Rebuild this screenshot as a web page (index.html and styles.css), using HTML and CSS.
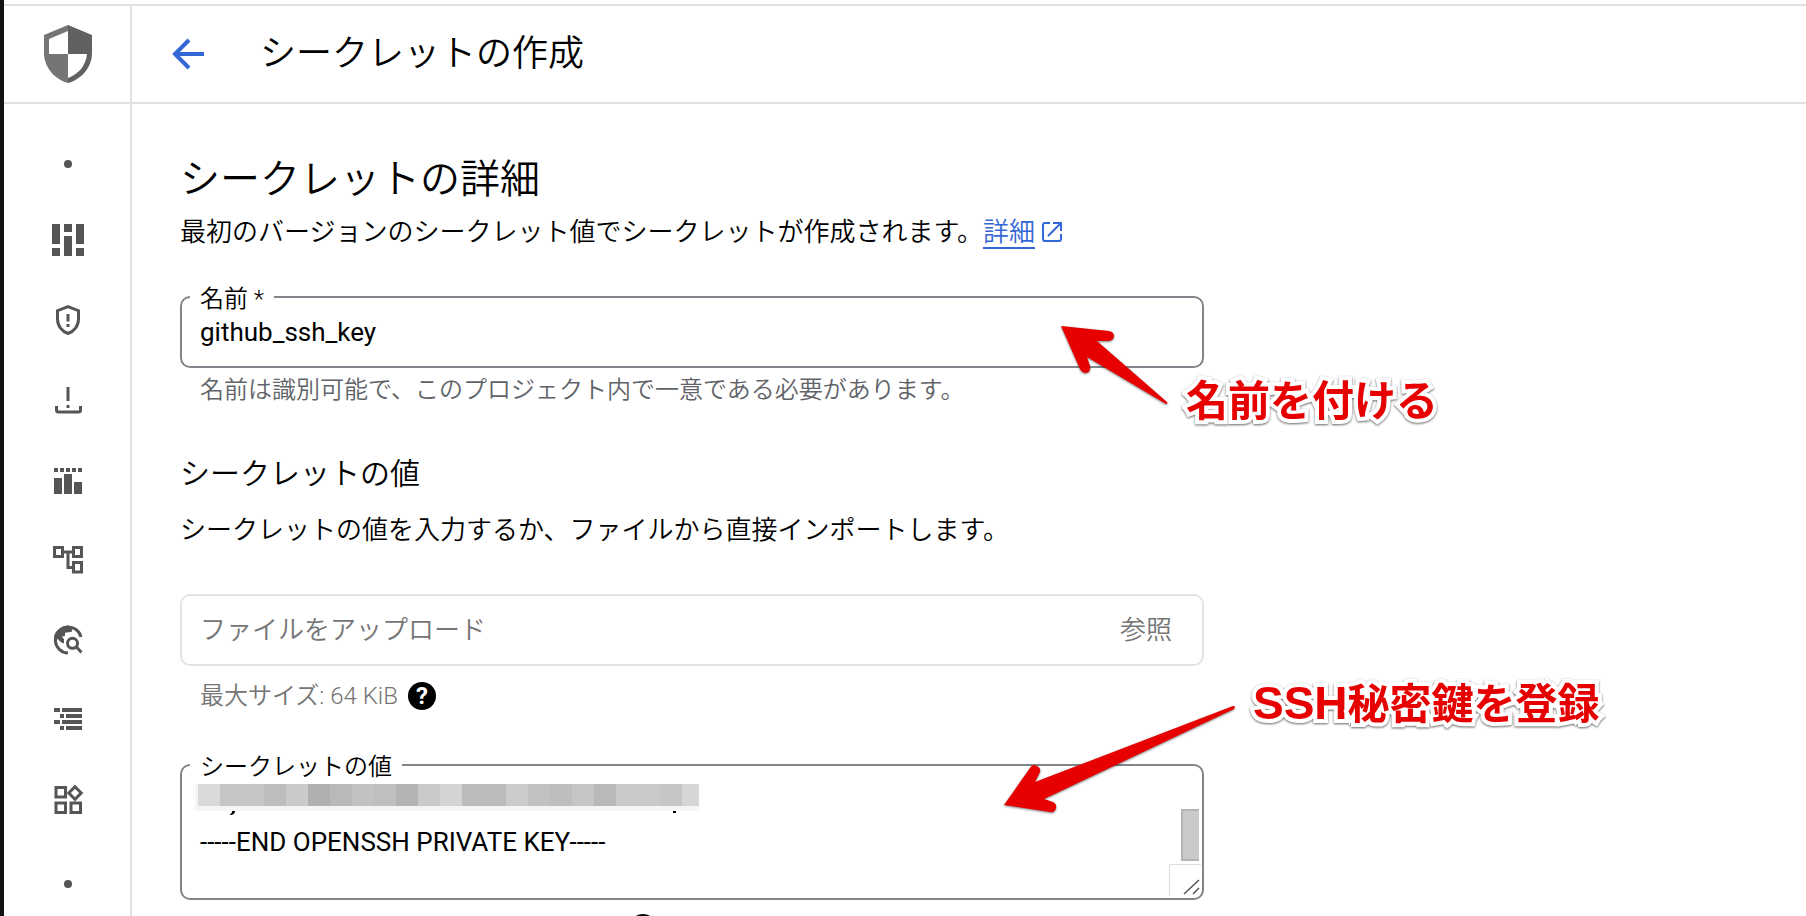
FILE: index.html
```html
<!DOCTYPE html>
<html lang="ja">
<head>
    <meta charset="UTF-8">
    <meta name="viewport" content="width=device-width, initial-scale=1.0">
    <title>シークレットの作成</title>
    <link rel="stylesheet" href="styles.css">
</head>
<body>
    <div class="app">
        <header class="topbar">
            <div class="product">
                <svg width="48" height="58" viewBox="0 0 48 58">
                    <path fill="#757575" d="M24 0 0 10v18c0 14 10 26 24 30z"/>
                    <path fill="#616161" d="M24 0l24 10v18c0 14-10 26-24 30z"/>
                    <path fill="#fff" d="M24 6 5 14v15h19z"/>
                    <path fill="#fff" d="M24 29h19c-1 11-8 20-19 24z"/>
                </svg>
            </div>
            <button class="back" type="button" aria-label="戻る">
                <svg width="32" height="32" viewBox="0 0 32 32" fill="none" stroke="#3367d6" stroke-width="4">
                    <path d="M32 16H4M17 2 3 16l14 14"/>
                </svg>
            </button>
            <h1>シークレットの作成</h1>
        </header>

        <div class="body">
            <nav class="sidebar">
                <a href="#" aria-label="セクション"><svg viewBox="0 0 36 36"><circle cx="18" cy="22" r="4"/></svg></a>
                <a href="#" aria-label="概要"><svg viewBox="0 0 36 36"><path d="M2 2h8v20H2zM2 26h8v8H2zM14 2h8v8h-8zM14 14h8v20h-8zM26 2h8v20h-8zM26 26h8v8h-8z"/></svg></a>
                <a href="#" aria-label="脅威"><svg viewBox="0 0 36 36"><path class="line" d="M18 4.700 28.500 8.700V17c0 7-4.500 12.500-10.500 14.500C12 29.500 7.500 24 7.500 17V8.700z"/><path d="M16.500 12h3v7.500h-3zM16.500 22h3v3h-3z"/></svg></a>
                <a href="#" aria-label="脆弱性"><svg viewBox="0 0 36 36"><path class="line" d="M6.500 24v4q0 2 2 2h20q2 0 2-2v-4"/><path d="M16.500 5h3v14h-3zM16.500 23h3v3h-3z"/></svg></a>
                <a href="#" aria-label="コンプライアンス"><svg viewBox="0 0 36 36"><path d="M4 6h4v4H4zM10 6h4v4h-4zM16 6h4v4h-4zM22 6h4v4h-4zM28 6h4v4h-4zM4 16h8v16H4zM14 12h8v20h-8zM24 20h8v12h-8z"/></svg></a>
                <a href="#" aria-label="アセット"><svg viewBox="0 0 36 36"><path class="line" d="M4.500 5.500h8v9h-8zM23.500 5.500h8v9h-8zM23.500 20.500h8v9.500h-8zM12.500 10h11M18 10v15.500h5.500"/></svg></a>
                <a href="#" aria-label="検出"><svg viewBox="0 0 36 36"><path class="line" d="M31 15A13 13 0 1 0 18 31M26.500 25l5 5.500"/><circle class="line" cx="22.500" cy="21.300" r="5"/><path d="M18 3.500 22.700 5.300 21.700 9.700 15 10.700V14l-3.300.7L14 17v4.300l-2.300-.6L4 14Q8 4 18 3.500z"/></svg></a>
                <a href="#" aria-label="ソース"><svg viewBox="0 0 36 36"><path d="M4 6h6v4H4zM12 6h20v4H12zM10 12h4v4h-4zM16 12h16v4H16zM4 18h6v4H4zM12 18h20v4H12zM10 24h4v4h-4zM16 24h16v4H16z"/></svg></a>
                <a href="#" aria-label="ポスチャー"><svg viewBox="0 0 36 36"><path class="line" d="M6 5.500h9.500V15H6zM6 21h9.500v9.500H6zM21 21h9.500v9.500H21zM25 4.700 31.200 11 25 17.300 18.800 11z"/></svg></a>
                <a href="#" aria-label="セクション"><svg viewBox="0 0 36 36"><circle cx="18" cy="22" r="4"/></svg></a>
            </nav>

            <main class="content">
                <h2>シークレットの詳細</h2>
                <p class="intro">最初のバージョンのシークレット値でシークレットが作成されます。<a href="#">詳細</a><svg class="external" width="22" height="22" viewBox="0 0 22 22" fill="none" stroke="#3367d6" stroke-width="2"><path d="M9 2H4Q2 2 2 4v14q0 2 2 2h14q2 0 2-2v-5M12 2h8v8M20 2 7 15"/></svg></p>

                <div class="field name-field">
                    <label for="name">名前 *</label>
                    <input id="name" type="text" value="github_ssh_key">
                    <div class="note note-name">
                        <svg width="110" height="82" viewBox="0 0 110 82">
                            <path d="M1 2 49 7q5 1 5 5t-5 5H37l70 61q1 2-1 2L27 33l3 9q1 6-4 7-4 0-6-4z"/>
                        </svg>
                        <span>名前を付ける</span>
                    </div>
                </div>
                <p class="hint">名前は識別可能で、このプロジェクト内で一意である必要があります。</p>

                <h3>シークレットの値</h3>
                <p>シークレットの値を入力するか、ファイルから直接インポートします。</p>

                <div class="field upload">
                    <input type="text" aria-label="ファイルをアップロード" placeholder="ファイルをアップロード" readonly>
                    <button type="button">参照</button>
                </div>
                <p class="hint size-hint">最大サイズ: 64 KiB
                    <button class="help" type="button" aria-label="ヘルプ">?</button>
                </p>

                <div class="field secret-field">
                    <label for="secret">シークレットの値</label>
                    <textarea id="secret" spellcheck="false">-----END OPENSSH PRIVATE KEY-----</textarea>
                    <!-- redacted key line -->
                    <svg class="redacted" width="504" height="32" viewBox="0 0 504 32">
                        <path fill="#f5f5f5" d="M0 0h3v27H0zM3 22h501v5H3z"/>
                        <path fill="#dadada" d="M3 0h22v22H3z"/>
                        <path fill="#c5c5c5" d="M25 0h44v22H25z"/>
                        <path fill="#bdbdbd" d="M69 0h22v22H69z"/>
                        <path fill="#cacaca" d="M91 0h22v22H91z"/>
                        <path fill="#b0b0b0" d="M113 0h22v22h-22z"/>
                        <path fill="#b9b9b9" d="M135 0h22v22h-22z"/>
                        <path fill="#c2c2c2" d="M157 0h22v22h-22z"/>
                        <path fill="#bfbfbf" d="M179 0h22v22h-22z"/>
                        <path fill="#b4b4b4" d="M201 0h22v22h-22z"/>
                        <path fill="#cacaca" d="M223 0h22v22h-22z"/>
                        <path fill="#d4d4d4" d="M245 0h22v22h-22z"/>
                        <path fill="#bbb" d="M267 0h44v22h-44z"/>
                        <path fill="#cbcbcb" d="M311 0h22v22h-22z"/>
                        <path fill="#c1c1c1" d="M333 0h22v22h-22z"/>
                        <path fill="#bebebe" d="M355 0h22v22h-22z"/>
                        <path fill="#c5c5c5" d="M377 0h22v22h-22z"/>
                        <path fill="#b9b9b9" d="M399 0h22v22h-22z"/>
                        <path fill="#cacaca" d="M421 0h44v22h-44z"/>
                        <path fill="#c6c6c6" d="M465 0h22v22h-22z"/>
                        <path fill="#d6d6d6" d="M487 0h17v22h-17z"/>
                        <path fill="#000" d="M37 27h3q0 4-5 4v-1q2 0 2-3zM478 27h3v2h-3z"/>
                    </svg>
                    <div class="scroll-thumb"></div>
                    <svg class="resizer" width="32" height="32" viewBox="0 0 32 32" fill="none">
                        <path stroke="#dcdcdc" d="M.5 32V.5H32"/>
                        <path stroke="#555" stroke-width="1.500" d="M15 30 30 16M24 30l6-6"/>
                    </svg>
                    <div class="note note-secret">
                        <svg width="234" height="110" viewBox="0 0 234 110">
                            <path d="M1 101 27 64q3-5 7-2 4 2 3 6l-5 10L230 2q3 0 1 3L41 95l9 3q4 2 3 6-1 5-6 4z"/>
                        </svg>
                        <span><b>SSH</b>秘密鍵を登録</span>
                    </div>
                </div>
                <p class="hint crc-hint">
                    <button class="help" type="button" aria-label="ヘルプ"></button>
                </p>
            </main>
        </div>
    </div>
</body>
</html>
```

FILE: styles.css
```css
* {
    box-sizing: border-box;
}

body {
    margin: 0;
    background: #fff;
    color: #000;
    font-family: Roboto, "Noto Sans CJK JP", sans-serif;
    font-size: 26px;
    font-weight: 350;
    line-height: 36px;
}

h1, h2, h3, p {
    margin: 0;
    font-weight: 350;
}

button, input, textarea {
    font: inherit;
    color: inherit;
    margin: 0;
    padding: 0;
    border: none;
    background: none;
}

button {
    cursor: pointer;
}

.app {
    display: flex;
    flex-direction: column;
    height: 100vh;
    padding-top: 4px;
    border-left: 4px solid #14120f;
    overflow: hidden;
}

/* Top bar */
.topbar {
    display: flex;
    align-items: center;
    flex-shrink: 0;
    height: 100px;
    border-top: 2px solid #e0e0e0;
    border-bottom: 2px solid #e0e0e0;
}

.product {
    display: flex;
    align-items: center;
    justify-content: center;
    width: 128px;
    height: 100%;
    padding-left: 2px;
    border-right: 2px solid #e0e0e0;
}

.back {
    display: flex;
    margin: 0 56px 0 40px;
}

h1 {
    font-size: 36px;
    line-height: 48px;
}

/* Sidebar */
.body {
    display: flex;
    flex: 1;
    min-height: 0;
}

.sidebar {
    flex-shrink: 0;
    width: 128px;
    padding: 16px 0 0 2px;
    border-right: 2px solid #e0e0e0;
    overflow: hidden;
}

.sidebar a {
    display: flex;
    align-items: center;
    justify-content: center;
    height: 80px;
}

.sidebar svg {
    width: 36px;
    height: 36px;
    fill: #555;
}

.sidebar .line {
    fill: none;
    stroke: #555;
    stroke-width: 3;
}

/* Form */
.content {
    flex: 1;
    min-width: 0;
    padding: 48px 48px 0;
    overflow: hidden;
}

h2 {
    margin-bottom: 6px;
    font-size: 40px;
    line-height: 56px;
}

h3 {
    margin: 46px 0 18px;
    font-size: 30px;
    line-height: 40px;
}

.intro a {
    color: #3367d6;
    text-decoration: none;
    border-bottom: 2px solid #3367d6;
}

.external {
    margin-left: 6px;
    vertical-align: -2px;
}

.field {
    position: relative;
    width: 100%;
    max-width: 1024px;
    height: 72px;
    border: 2px solid #80868b;
    border-radius: 10px;
}

.field label {
    position: absolute;
    top: -17px;
    left: 8px;
    padding: 0 10px;
    background: #fff;
    font-size: 24px;
}

.field input,
.field textarea {
    display: block;
    width: 100%;
    height: 100%;
    padding: 0 18px;
    outline: none;
    font-weight: 400;
}

.name-field {
    margin-top: 46px;
}

.hint {
    margin-top: 4px;
    padding-left: 20px;
    color: #5f6368;
    font-size: 24px;
}

.upload {
    display: flex;
    align-items: center;
    margin-top: 46px;
    padding-right: 30px;
    border-color: #e4e4e4;
    color: #757575;
}

.upload input {
    flex: 1;
    font-weight: 350;
}

.upload input::placeholder {
    color: #757575;
    opacity: 1;
}

.size-hint {
    display: flex;
    align-items: center;
    gap: 10px;
    margin-top: 12px;
    color: #757575;
}

.help {
    width: 28px;
    height: 28px;
    border-radius: 50%;
    background: #000;
    color: #fff;
    font-size: 24px;
    font-weight: 700;
    line-height: 28px;
}

.secret-field {
    height: 136px;
    margin-top: 50px;
}

.field textarea {
    padding-top: 58px;
    resize: none;
    overflow: hidden;
}

.redacted {
    position: absolute;
    top: 18px;
    left: 13px;
}

.scroll-thumb {
    position: absolute;
    top: 43px;
    right: 3px;
    width: 18px;
    height: 52px;
    border: 2px solid #b5b5b5;
    border-right: none;
    background: #cacaca;
}

.resizer {
    position: absolute;
    right: 1px;
    bottom: 2px;
}

.crc-hint {
    display: flex;
    margin-top: 14px;
    padding-left: 449px;
}

/* Red callouts */
.note {
    position: absolute;
    display: flex;
    color: #e60000;
    font-size: 42px;
    font-weight: 700;
    line-height: 56px;
    white-space: nowrap;
    pointer-events: none;
}

.note svg {
    flex-shrink: 0;
    fill: #e60000;
    filter: drop-shadow(0 1px 1px rgba(0, 0, 0, 0.5));
}

.note span {
    -webkit-text-stroke: 8px #fff;
    paint-order: stroke fill;
    filter: drop-shadow(0 1px 1px rgba(0, 0, 0, 0.6));
}

.note b {
    font-family: "Liberation Sans", Arial, sans-serif;
    font-size: 46px;
}

.note-name {
    top: 26px;
    left: 878px;
    align-items: flex-end;
    gap: 16px;
}

.note-name span {
    margin-bottom: -24px;
}

.note-secret {
    top: -62px;
    left: 821px;
    align-items: flex-start;
    gap: 16px;
}

.note-secret span {
    margin-top: -29px;
}
```
